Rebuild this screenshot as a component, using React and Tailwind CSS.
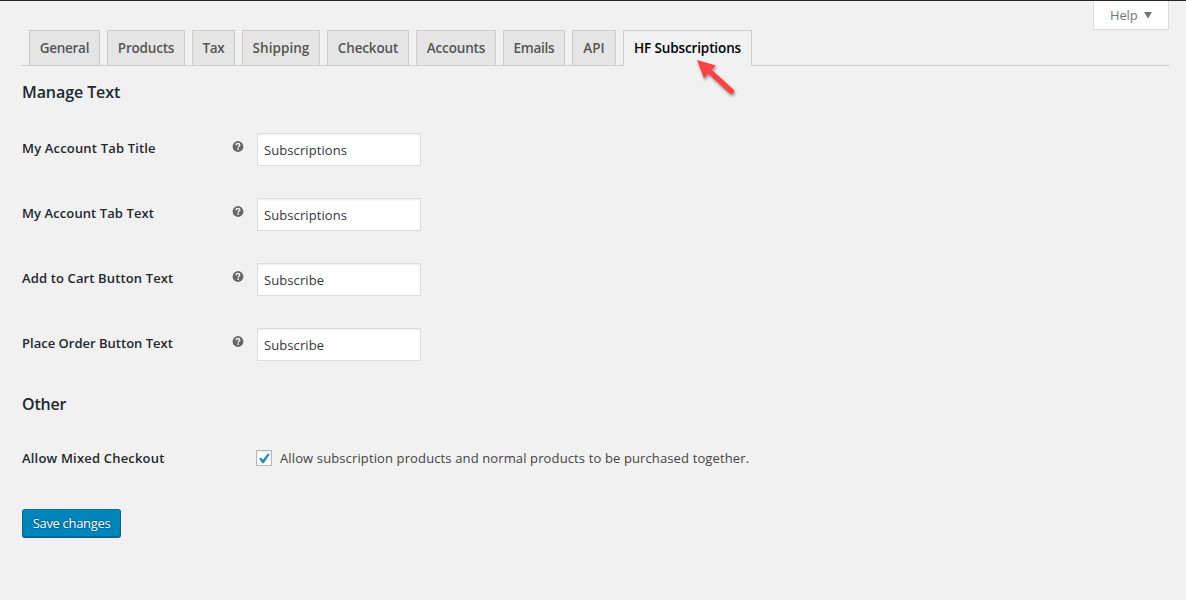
const tabs = [
  { label: 'General', box: 'w-[71px] tracking-[-0.3px]' },
  { label: 'Products', box: 'w-[78px] tracking-[-0.2px]' },
  { label: 'Tax', box: 'w-[43px] tracking-[-0.35px]' },
  { label: 'Shipping', box: 'w-[78px] tracking-[0.05px]' },
  { label: 'Checkout', box: 'w-[82px] tracking-[-0.15px]' },
  { label: 'Accounts', box: 'w-[80px] tracking-[-0.15px]' },
  { label: 'Emails', box: 'w-[62px] tracking-[-0.25px]' },
  { label: 'API', box: 'w-[44px] tracking-[0.1px]' },
  { label: 'HF Subscriptions', box: 'w-[129px] tracking-[-0.12px]', active: true },
];

const fields = [
  { label: 'My Account Tab Title', value: 'Subscriptions', spacing: 'tracking-[0.17px]' },
  { label: 'My Account Tab Text', value: 'Subscriptions', spacing: 'tracking-[0.09px]' },
  { label: 'Add to Cart Button Text', value: 'Subscribe', spacing: 'tracking-[0.13px]' },
  { label: 'Place Order Button Text', value: 'Subscribe', spacing: 'tracking-[0.01px]' },
];

function HelpTip() {
  return (
    <svg className="mt-[8px] h-[11px] w-[12px] shrink-0" viewBox="0 0 12 11">
      <circle cx="6" cy="5.5" r="5.4" fill="#666" />
      <path d="M4.200 4.200C4.200 2.900 5 2.500 6 2.500S7.700 3 7.700 4c0 1.200-1.600 1.300-1.600 2.600" fill="none" stroke="#f1f1f1" strokeWidth="1.500" />
      <rect x="5.300" y="7.300" width="1.600" height="1.600" fill="#f1f1f1" />
    </svg>
  );
}

function Tab({ label, box, active }) {
  return (
    <div
      className={
        (active
          ? 'border-b-[#f1f1f1] bg-[#f1f1f1] text-black '
          : 'border-b-[#ccc] bg-[#e5e5e5] text-[#555] ') +
        'flex h-9 shrink-0 justify-center border border-[#ccc] pt-[5px] text-[13.5px] leading-6 font-semibold whitespace-nowrap ' +
        box
      }
    >
      {label}
    </div>
  );
}

export default function App() {
  return (
    <div className="h-[600px] w-[1186px] overflow-hidden border-t border-[#23282d] bg-[#f1f1f1] pr-[17px] pl-[22px] font-['Open_Sans','Noto_Sans',sans-serif] text-[13px] text-[#444]">
      <div className="flex h-[29px] justify-end">
        <div className="flex h-[29px] w-[76px] items-start border border-t-0 border-[#ddd] bg-white pt-[4px] pl-4 text-[13px] leading-5 text-[#72777c] shadow-[0_1px_1px_-1px_rgba(0,0,0,0.1)]">
          <span className="tracking-[-0.15px]">Help</span>
          <svg className="mt-[7px] ml-[6px] h-[7px] w-2" viewBox="0 0 8 7">
            <path d="M0 0h8L4 6.500z" fill="#72777c" />
          </svg>
        </div>
      </div>

      <nav className="relative h-9 pl-[7px]">
        <div className="absolute inset-x-0 bottom-0 h-px bg-[#ccc]" />
        <div className="relative flex gap-[7px]">
          {tabs.map((t) => (
            <Tab key={t.label} {...t} />
          ))}
        </div>
        <svg className="absolute top-[26px] left-[670px] h-[44px] w-[50px]" viewBox="692 56 50 44">
          <g className="drop-shadow-[1px_2px_1.5px_rgba(0,0,0,0.4)]">
            <path d="M697 60L716 65.500L711.500 69.500L733.500 89.500A2.800 2.800 0 0 1 729.700 93.500L708 73.500L704 78.500Z" fill="#fb4343" />
          </g>
        </svg>
      </nav>

      <h2 className="mt-[14px] h-6 text-[16px] leading-6 font-semibold tracking-[-0.08px] text-[#23282d]">Manage Text</h2>

      <div className="mt-[29px] flex flex-col gap-8">
        {fields.map((f) => (
          <div key={f.label} className="flex h-[33px] items-start">
            <div className={'w-[210px] shrink-0 pt-[5px] text-[13px] leading-5 font-semibold text-[#23282d] ' + f.spacing}>{f.label}</div>
            <HelpTip />
            <div className="ml-[13px] flex h-[33px] w-[164px] border border-[#ddd] bg-white pt-[6px] pl-[6px] text-[13px] leading-5 tracking-[0.08px] text-[#32373c] shadow-[inset_0_1px_2px_rgba(0,0,0,0.07)]">
              {f.value}
            </div>
          </div>
        ))}
      </div>

      <h2 className="mt-[31px] h-6 text-[16px] leading-6 font-semibold tracking-[-0.2px] text-[#23282d]">Other</h2>

      <div className="mt-[32px] flex h-5 items-center">
        <div className="w-[234px] shrink-0 text-[13px] leading-5 font-semibold tracking-[0.19px] text-[#23282d]">Allow Mixed Checkout</div>
        <div className="h-4 w-4 shrink-0 border border-[#b4b9be] bg-white shadow-[inset_0_1px_2px_rgba(0,0,0,0.1)]">
          <svg className="h-[14px] w-[14px]" viewBox="0 0 14 14">
            <path d="M2 7.600L4.200 6.700L6 8.800L10.700 2.400L12.800 3.300L6.800 12.200H5.300Z" fill="#1e8cbe" />
          </svg>
        </div>
        <span className="ml-2 leading-5 tracking-[0.125px] whitespace-nowrap">Allow subscription products and normal products to be purchased together.</span>
      </div>

      <button className="mt-[41px] flex h-[29px] w-[99px] justify-center rounded-[3px] border border-[#006799] border-t-[#0073aa] bg-[#0085ba] pt-[3px] text-[13px] leading-5 tracking-[-0.32px] whitespace-nowrap text-white shadow-[inset_0_-1px_0_#006799] [text-shadow:0_-1px_1px_#006799,1px_0_1px_#006799,0_1px_1px_#006799,-1px_0_1px_#006799]">
        Save changes
      </button>
    </div>
  );
}
